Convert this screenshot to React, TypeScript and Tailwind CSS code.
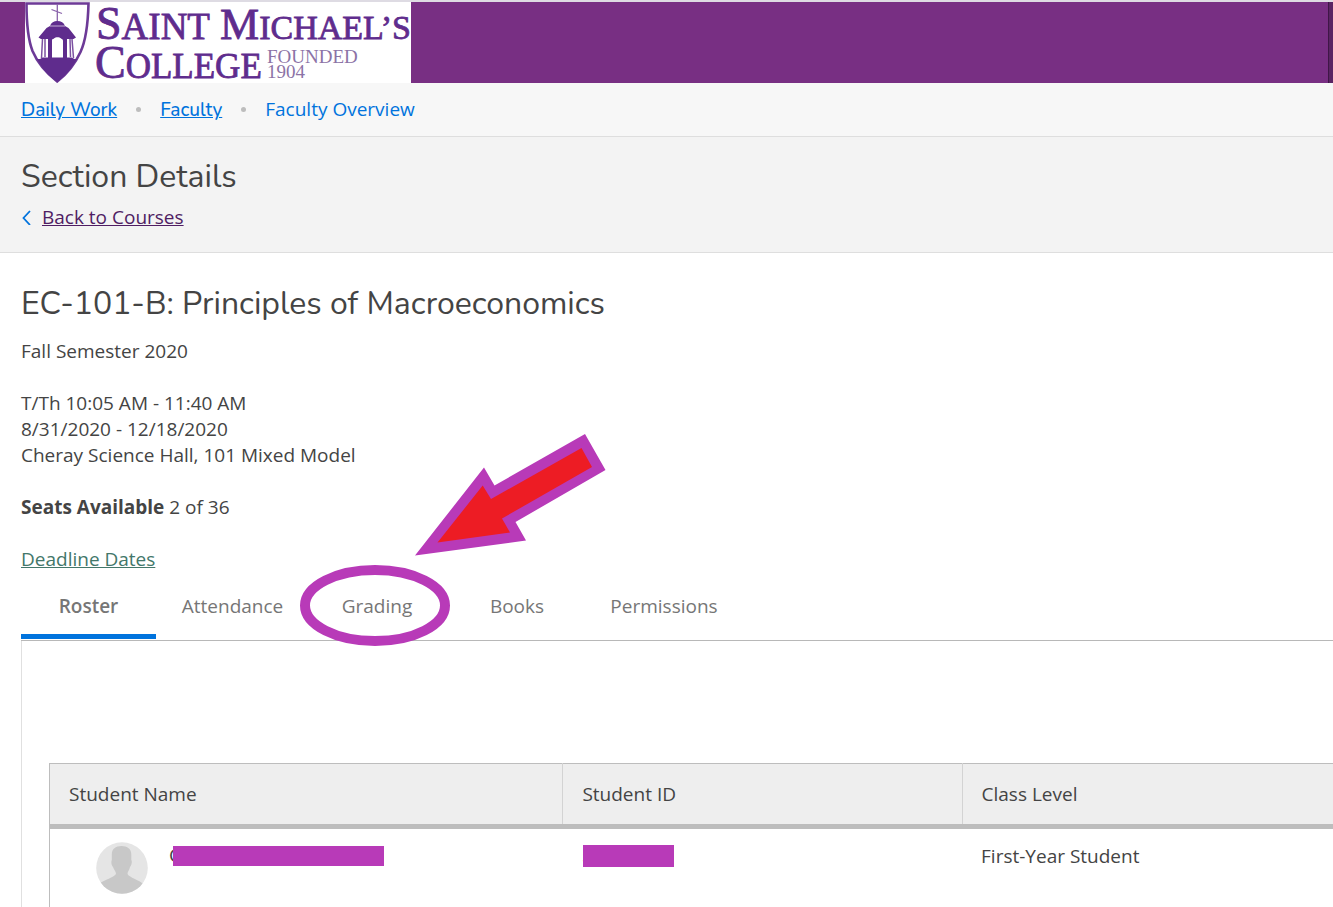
const tabs = [
  { label: 'Roster', size: 'w-[135px]' },
  { label: 'Attendance', size: 'w-[153px]' },
  { label: 'Grading', size: 'w-[136px]' },
  { label: 'Books', size: 'w-[144px]' },
  { label: 'Permissions', size: 'w-[150px]' },
];

function Logo() {
  return (
    <svg
      className="ml-[25px] h-[81px] w-[386px] shrink-0 bg-white"
      viewBox="25 2 386 81"
      role="img"
      aria-label="Saint Michael's College, founded 1904"
    >
      <path
        d="M26.500 3.500H88.500C88 24 86.500 39 80.500 52C75 64 67 74 57.200 81.500C46.500 73 37.500 63 32.500 51C27.500 38 26.500 24 26.500 3.500Z"
        fill="#fff"
        stroke="#6d3a97"
        strokeWidth="2.600"
      />
      <path d="M40 59L42.500 57.500H71.500L74.500 59H77C72 68 65.500 76 57.200 82C48.500 76 41.500 68 37 59Z" fill="#5f2c8d" />
      <path d="M57.300 4V22M51.500 9.500L62 13.500" stroke="#8a63ab" strokeWidth="1.300" fill="none" />
      <path d="M50 26C51 22.800 54 21 57.300 21C61 21 64 22.800 65 26L68.500 28L76 37.500L73.500 39H41L38.500 37.500L46.500 28Z" fill="#5f2c8d" />
      <path d="M50 26H65" stroke="#c5afd5" strokeWidth="1" />
      <path d="M48 38H67V58H63V41C62 34.500 52.500 34.500 52 41V58H48Z" fill="#5f2c8d" />
      <path d="M52 57V42C52.500 35.500 62.500 35.500 63 42V57Z" fill="#fff" />
      <path d="M42.500 39L41.500 58M45 39V57M70 39L70.500 57M72 39L73.500 58" stroke="#7c51a1" strokeWidth="1.500" fill="none" />
      <g fontFamily="Liberation Serif, serif" fill="#5f2c8d" stroke="#5f2c8d" strokeWidth="0.800">
        <text x="96" y="39" fontSize="46">S<tspan fontSize="37">AINT</tspan></text>
        <text x="220" y="39" fontSize="44">M<tspan fontSize="34">ICHAEL’S</tspan></text>
        <text x="95" y="78" fontSize="46">C<tspan fontSize="35">OLLEGE</tspan></text>
      </g>
      <g fontFamily="Liberation Serif, serif" fill="#8c73a6" fontSize="19">
        <text x="267" y="63">FOUNDED</text>
        <text x="267" y="78">1904</text>
      </g>
    </svg>
  );
}

function Avatar() {
  return (
    <svg className="size-[52px] shrink-0" viewBox="0 0 52 52" role="img" aria-label="Student photo">
      <defs>
        <clipPath id="avatar-clip">
          <circle cx="26" cy="26" r="25.800" />
        </clipPath>
      </defs>
      <g clipPath="url(#avatar-clip)">
        <rect width="52" height="52" fill="#e5e5e5" />
        <path
          d="M25.500 4C31.500 4 35.500 7 35.300 13V18C36.500 19 35.500 23.500 34 25C33.500 28 31.500 29.500 31.500 32C34 36 42 37.500 47.500 42V53H3V42C9 37 17.500 36 20 32C20 29.500 18 28 17 25C15.500 23.500 14.800 20 15.800 18V13C15.600 7 19.500 4 25.500 4Z"
          fill="#c8c8c8"
        />
      </g>
    </svg>
  );
}

function GradingCallout() {
  return (
    <svg
      className="pointer-events-none absolute -top-[138px] -left-[10px] h-[212px] w-[310px] max-w-none"
      viewBox="299 434 310 212"
      aria-hidden="true"
    >
      <ellipse cx="375" cy="605.500" rx="70" ry="35.500" fill="none" stroke="#b83ab8" strokeWidth="10" />
      <path d="M415 555.500L484 467.500L494.500 485.500L585 434L605.500 470L515.500 522L526 540.500Z" fill="#b83ab8" />
      <path d="M437.500 542.500L482.700 485.500L491 499L581.500 448L592 467L502 518.500L510 532.500Z" fill="#ed1c24" />
    </svg>
  );
}

export default function App() {
  return (
    <div className="flex min-h-screen flex-col overflow-x-hidden bg-white font-['Open_Sans','Noto_Sans',sans-serif] text-[19px] leading-[26px] text-[#444]">
      <header className="flex border-t-2 border-[#dedbe3] bg-[#782f83]">
        <Logo />
        <div className="ml-auto w-[5px] border-l border-[#3f1647] bg-[#5a2463]" />
      </header>

      <nav aria-label="Breadcrumb" className="border-b border-[#dedede] bg-[#f7f7f7] px-[21px] py-[13px]">
        <ol className="flex items-baseline text-[#0073dd]">
          <li><a href="#daily" className="font-[Nunito,'Noto_Sans',sans-serif] font-medium underline">Daily Work</a></li>
          <li aria-hidden="true" className="mx-[19px] size-[5px] self-center rounded-full bg-[#bdbdbd]" />
          <li><a href="#faculty" className="font-[Nunito,'Noto_Sans',sans-serif] font-medium underline">Faculty</a></li>
          <li aria-hidden="true" className="mx-[19px] size-[5px] self-center rounded-full bg-[#bdbdbd]" />
          <li aria-current="page">Faculty Overview</li>
        </ol>
      </nav>

      <section className="border-b border-[#dedede] bg-[#f3f3f3] px-[21px] pt-[19px] pb-[22px]">
        <h1 className="font-[Nunito,Lato,sans-serif] text-[32px] leading-[42px]">Section Details</h1>
        <a href="#courses" className="mt-[6px] flex items-center text-[#4f1d63]">
          <svg className="mr-[11px] h-4 w-[10px]" viewBox="0 0 10 16" fill="none" stroke="#0073dd" strokeWidth="1.800" aria-hidden="true">
            <path d="M9 2L2.500 9L9 16" />
          </svg>
          <span className="underline">Back to Courses</span>
        </a>
      </section>

      <main className="flex grow flex-col pl-[21px]">
        <h2 className="mt-[30px] font-[Nunito,Lato,sans-serif] text-[32px] leading-[42px]">
          EC-101-B: Principles of Macroeconomics
        </h2>
        <p className="mt-[13px]">Fall Semester 2020</p>
        <p className="mt-[26px]">
          T/Th 10:05 AM - 11:40 AM
          <br />
          8/31/2020 - 12/18/2020
          <br />
          Cheray Science Hall, 101 Mixed Model
        </p>
        <p className="mt-[26px]"><strong className="font-bold">Seats Available</strong> 2 of 36</p>
        <p className="mt-[26px]"><a href="#deadlines" className="text-[#43776a] underline">Deadline Dates</a></p>

        <div role="tablist" className="flex border-b border-[#b8b8b8] text-[#767676]">
          {tabs.map((tab, index) => (
            <div key={tab.label} className={`relative ${tab.size}`}>
              <button
                type="button"
                role="tab"
                aria-selected={index === 0}
                className={`mb-px w-full border-b-5 pt-[21px] pb-[15px] text-center ${
                  index === 0 ? 'border-[#0073dd] font-semibold' : 'border-transparent'
                }`}
              >
                {tab.label}
              </button>
              {tab.label === 'Grading' && <GradingCallout />}
            </div>
          ))}
        </div>

        <div role="tabpanel" className="grow border-l border-[#e0e0e0] pt-[122px] pl-[27px]">
          <table className="w-full table-fixed border-l border-[#bdbdbd] text-left">
            <colgroup>
              <col className="w-[40%]" />
              <col className="w-[31.1%]" />
              <col />
            </colgroup>
            <thead>
              <tr className="h-[63px] border-t border-b-5 border-t-[#bdbdbd] border-b-[#bdbdbd] bg-[#eee]">
                <th className="border-r border-r-[#d3d3d3] px-[19px] font-normal">Student Name</th>
                <th className="border-r border-r-[#d3d3d3] px-[19px] font-normal">Student ID</th>
                <th className="px-[19px] font-normal">Class Level</th>
              </tr>
            </thead>
            <tbody>
              <tr className="h-[80px] align-top">
                <td className="pt-[13px] pl-[46px]">
                  <div className="flex">
                    <Avatar />
                    <div className="relative ml-[21px] h-[26px] w-[215px]">
                      C
                      <span className="absolute top-[4px] left-[4px] h-[20px] w-[211px] bg-[#b83ab8]" />
                    </div>
                  </div>
                </td>
                <td className="px-[19px] pt-[13px]">
                  <div className="relative h-[26px] w-[92px]">
                    5
                    <span className="absolute top-[3px] left-[1px] h-[22px] w-[91px] bg-[#b83ab8]" />
                  </div>
                </td>
                <td className="px-[19px] pt-[14px]">First-Year Student</td>
              </tr>
            </tbody>
          </table>
        </div>
      </main>
    </div>
  );
}
